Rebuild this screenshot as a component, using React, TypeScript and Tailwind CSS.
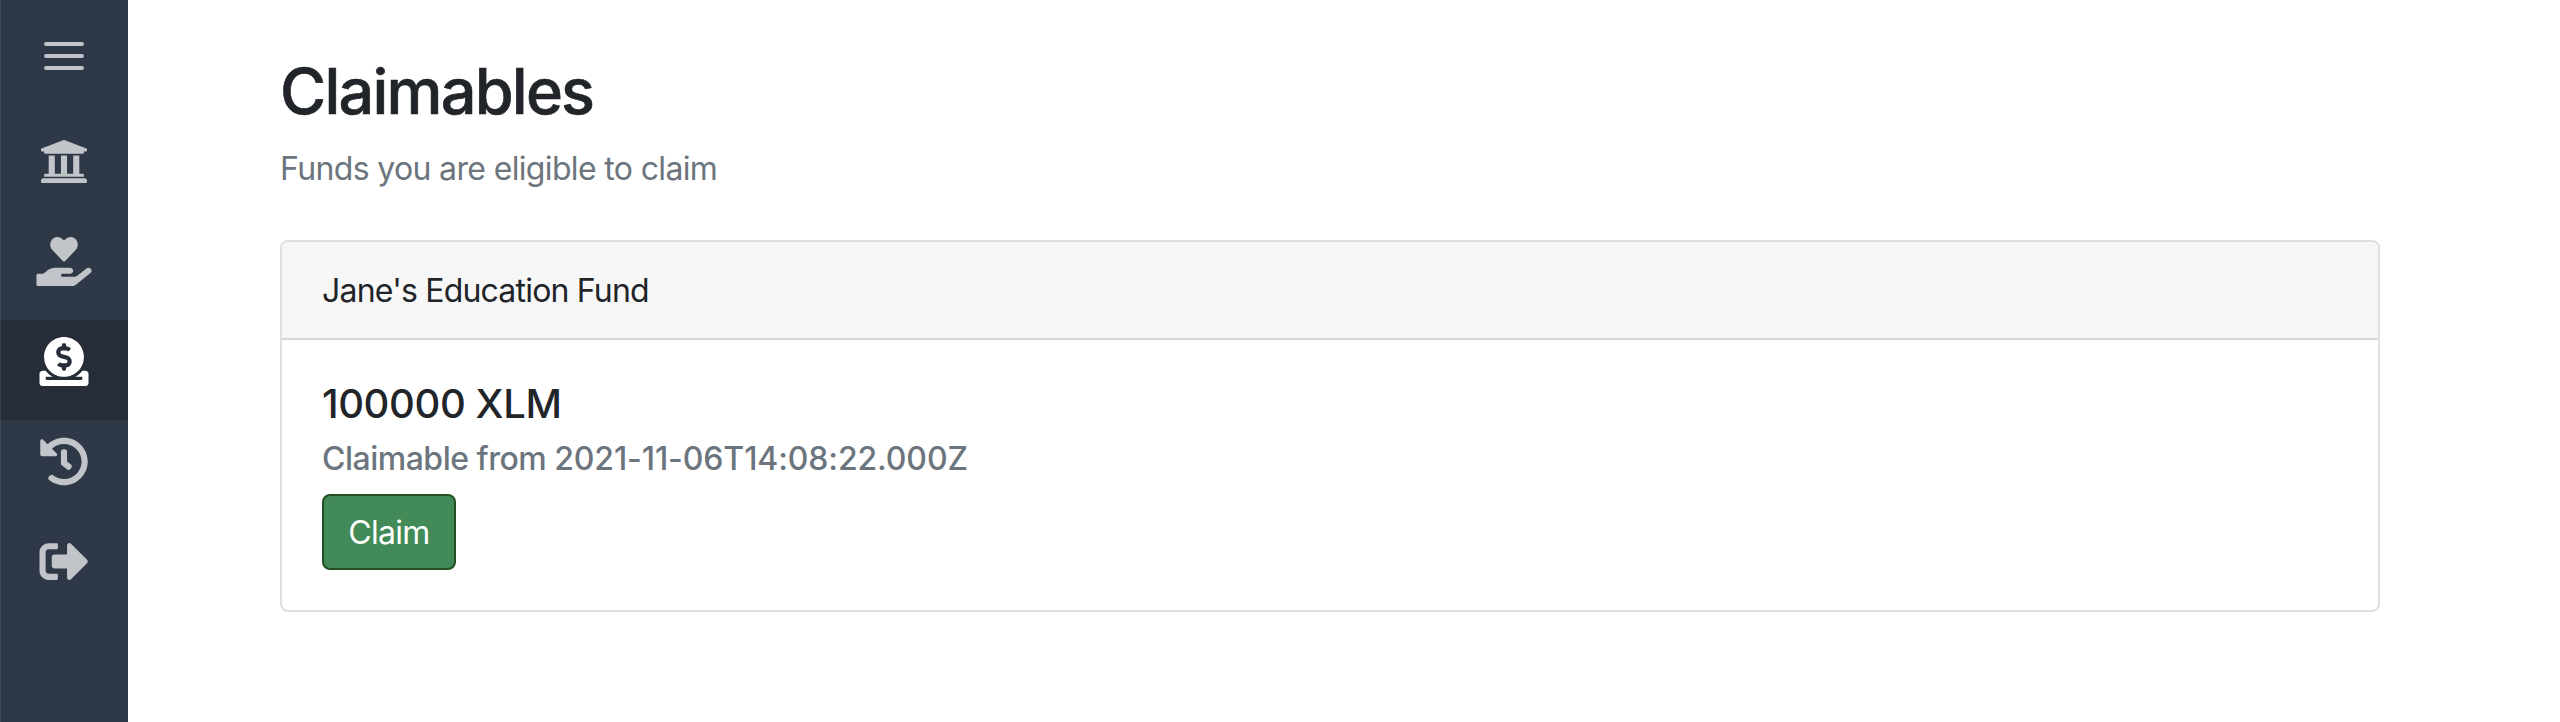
import type { ReactNode } from "react";
import {
  FaUniversity,
  FaHandHoldingHeart,
  FaDonate,
  FaHistory,
  FaSignOutAlt,
} from "react-icons/fa";

function NavItem({ active = false, label, children }: { active?: boolean; label: string; children: ReactNode }) {
  return (
    <a
      aria-label={label}
      className={
        active
          ? "flex h-[100px] shrink-0 justify-center bg-[#262d38] pt-[17px] text-white shadow-[inset_1px_0_0_#39404a]"
          : "flex h-[100px] shrink-0 justify-center pt-[17px] text-[#c1c4c8]"
      }
    >
      {children}
    </a>
  );
}

export default function App() {
  return (
    <div className="flex h-[722px] w-full bg-white font-[Inter,'Liberation_Sans',sans-serif] text-[#212529]">
      <nav className="flex w-32 shrink-0 flex-col bg-[#2f3846] shadow-[inset_1px_0_0_#414a58]">
        <button aria-label="Menu" className="flex h-[120px] shrink-0 flex-col items-center gap-2 pt-[42px]">
          <span className="h-1 w-10 rounded-full bg-[#c1c4c8]" />
          <span className="h-1 w-10 rounded-full bg-[#c1c4c8]" />
          <span className="h-1 w-10 rounded-full bg-[#c1c4c8]" />
        </button>
        <NavItem label="Bank"><FaUniversity className="h-[49px] w-[50px]" /></NavItem>
        <NavItem label="Give"><FaHandHoldingHeart className="h-[49px] w-[56px]" /></NavItem>
        <NavItem label="Claimables" active><FaDonate className="h-[49px] w-[50px]" /></NavItem>
        <NavItem label="History"><FaHistory className="h-[49px] w-[50px]" /></NavItem>
        <NavItem label="Sign out"><FaSignOutAlt className="h-[49px] w-[50px]" /></NavItem>
      </nav>
      <main className="flex-1 pl-[152px] pr-[180px] pt-[53px]">
        <h1 className="text-[63px] font-medium leading-[77px] tracking-[-1.8px] [-webkit-text-stroke:0.6px_#212529]">
          Claimables
        </h1>
        <p className="mt-[15px] text-[32px] leading-[48px] tracking-[-0.65px] text-[#6c757d]">
          Funds you are eligible to claim
        </p>
        <section className="mt-[47px] h-[372px] rounded-lg border-2 border-[#dfdfdf]">
          <header className="flex h-[98px] items-center rounded-t-md border-b-2 border-[#d8d8d8] bg-[#f7f7f7] px-10 pt-0.5 text-[32px] tracking-[-0.8px]">
            Jane's Education Fund
          </header>
          <div className="px-10 pt-10">
            <h5 className="text-[40px] font-medium leading-[48px] tracking-[-0.4px]">100000 XLM</h5>
            <h6 className="mt-3 text-[32px] font-medium leading-[38px] text-[#6c757d]">
              <span className="tracking-[-0.5px]">Claimable from </span>
              <span className="tracking-[-0.12px]">2021-11-06T14:08:22.000Z</span>
            </h6>
            <button className="mt-4 flex h-[76px] w-[134px] items-center justify-center rounded-lg border-2 border-[#234f22] bg-[#428a58] pt-0.5 text-[32px] tracking-[-0.7px] text-white">
              Claim
            </button>
          </div>
        </section>
      </main>
    </div>
  );
}
